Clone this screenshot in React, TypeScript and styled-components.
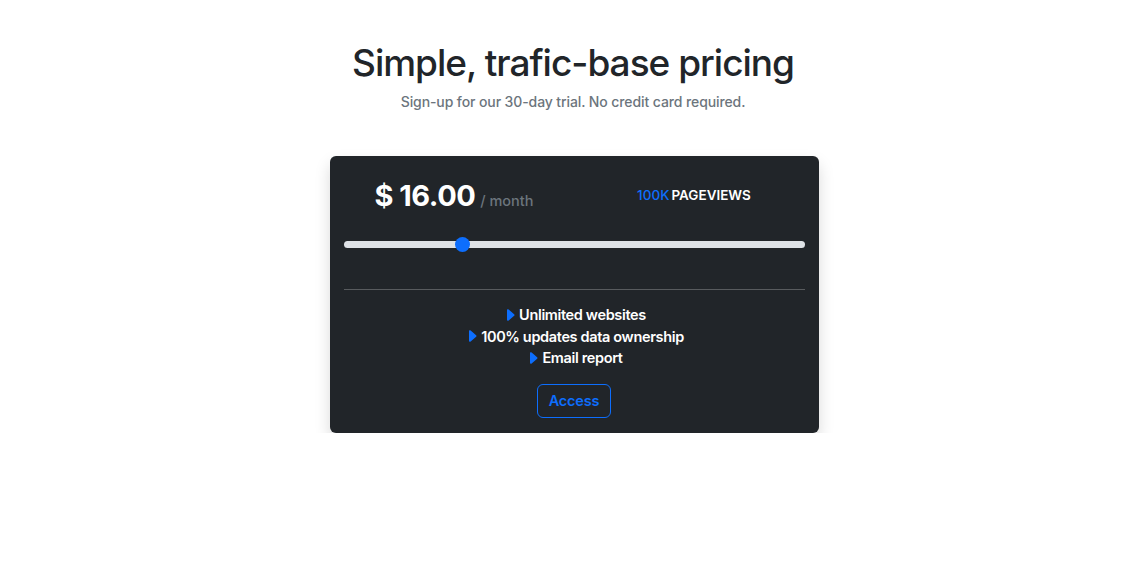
import styled, { createGlobalStyle } from "styled-components";
import { useState } from "react";

const GlobalStyle = createGlobalStyle`
    body {
        margin: 0;
        background: #ffffff;
        font-family: Inter, "Noto Sans", sans-serif;
        color: #212529;
    }
`;

const features = ["Unlimited websites", "100% updates data ownership", "Email report"];

const CaretIcon = () => (
    <svg width="16" height="16" viewBox="0 0 16 16" fill="#0d6efd">
        <path d="m12.14 8.753-5.482 4.796c-.646.566-1.658.106-1.658-.753V3.204a1 1 0 0 1 1.659-.753l5.48 4.796a1 1 0 0 1 0 1.506z" />
    </svg>
);

const App = () => {
    const [views, setViews] = useState(25);
    return <StyledPage>
        <GlobalStyle />
        <StyledTitle>Simple, trafic-base pricing</StyledTitle>
        <StyledSubtitle>Sign-up for our 30-day trial. No credit card required.</StyledSubtitle>
        <StyledCard>
            <StyledPriceRow>
                <StyledCol $shift={9}>
                    <StyledPrice>$ 16.00</StyledPrice>
                    <StyledPeriod>/ month</StyledPeriod>
                </StyledCol>
                <StyledCol $shift={-10}>
                    <StyledViews><span>100K</span>PAGEVIEWS</StyledViews>
                </StyledCol>
            </StyledPriceRow>
            <StyledRange
                type="range"
                min={0}
                max={100}
                value={views}
                onChange={e => setViews(Number(e.target.value))}
            />
            <StyledDivider />
            <StyledList>
                {features.map(f => <StyledItem key={f}><CaretIcon />{f}</StyledItem>)}
            </StyledList>
            <StyledButton type="button">Access</StyledButton>
        </StyledCard>
    </StyledPage>
}
export default App;

const StyledPage = styled.div`
    display: flex;
    flex-direction: column;
    align-items: center;
    padding-top: 39px;
`
const StyledTitle = styled.h1`
    margin: 0;
    font-size: 37px;
    font-weight: 500;
    line-height: 48px;
    letter-spacing: -1px;
    color: #212529;
`
const StyledSubtitle = styled.p`
    margin: 4px 0 0;
    font-size: 14px;
    font-weight: 500;
    line-height: 22px;
    letter-spacing: -0.1px;
    color: #6c757d;
`
const StyledCard = styled.div`
    margin-top: 43px;
    margin-left: 2px;
    width: 489px;
    box-sizing: border-box;
    padding: 14px 14px 15px;
    background-color: #212529;
    border-radius: 6px;
    box-shadow: 0 8px 16px rgba(0, 0, 0, 0.15);
    display: flex;
    flex-direction: column;
    align-items: center;
`
const StyledPriceRow = styled.div`
    width: 100%;
    display: flex;
    align-items: center;
    height: 50px;
`
const StyledCol = styled.div<{ $shift: number }>`
    flex: 1;
    display: flex;
    align-items: baseline;
    justify-content: center;
    padding-right: ${p => Math.max(p.$shift, 0)}px;
    padding-left: ${p => Math.max(-p.$shift, 0)}px;
`
const StyledPrice = styled.span`
    font-size: 29px;
    font-weight: 700;
    color: #ffffff;
    letter-spacing: -0.5px;
`
const StyledPeriod = styled.span`
    margin-left: 5px;
    font-size: 14.5px;
    font-weight: 500;
    color: #6c757d;
`
const StyledViews = styled.span`
    font-size: 13.5px;
    font-weight: 600;
    color: #ffffff;
    span {
        color: #0d6efd;
        font-weight: 500;
        margin-right: 2px;
    }
`
const StyledRange = styled.input`
    -webkit-appearance: none;
    appearance: none;
    width: 100%;
    height: 16px;
    margin: 16px 0 0;
    background: transparent;
    outline: 0;
    &::-webkit-slider-runnable-track {
        height: 7px;
        border-radius: 4px;
        background: #dee2e6;
    }
    &::-webkit-slider-thumb {
        -webkit-appearance: none;
        width: 15px;
        height: 15px;
        margin-top: -4px;
        border-radius: 50%;
        background: #0d6efd;
        border: 0;
    }
`
const StyledDivider = styled.hr`
    width: 100%;
    margin: 37px 0 0;
    border: 0;
    border-top: 1px solid rgba(255, 255, 255, 0.25);
`
const StyledList = styled.ul`
    list-style: none;
    margin: 14px 0 0;
    padding: 0;
    display: flex;
    flex-direction: column;
    align-items: center;
`
const StyledItem = styled.li`
    display: flex;
    align-items: center;
    font-size: 14.5px;
    font-weight: 600;
    line-height: 21.5px;
    color: #ffffff;
    letter-spacing: -0.35px;
    svg {
        margin-right: 1px;
    }
`
const StyledButton = styled.button`
    margin-top: 15px;
    padding: 0 10.5px;
    height: 34px;
    background: transparent;
    border: 1px solid #0d6efd;
    border-radius: 6px;
    font-family: inherit;
    font-size: 14.5px;
    font-weight: 600;
    letter-spacing: -0.2px;
    color: #0d6efd;
    cursor: pointer;
`
